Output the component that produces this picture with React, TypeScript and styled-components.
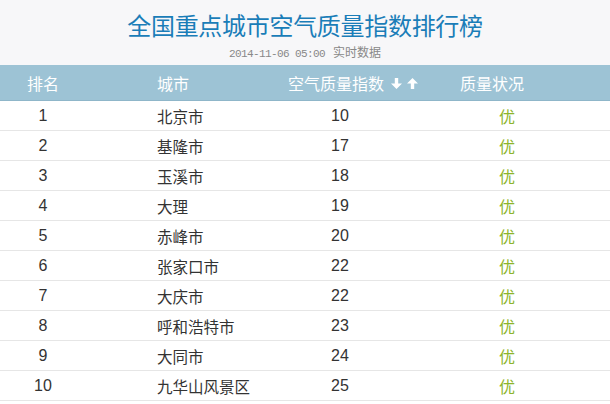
import React from "react";
import styled, { createGlobalStyle } from "styled-components";

const Global = createGlobalStyle`
  html, body { margin: 0; padding: 0; background: #fff; }
  body { font-family: "Liberation Sans", "Noto Sans CJK SC", sans-serif; }
`;

const Page = styled.div`
  width: 610px;
  height: 404px;
  overflow: hidden;
  background: #fff;
`;

const Top = styled.div`
  background: #f7f7f9;
  height: 65px;
  display: flex;
  flex-direction: column;
  align-items: center;
`;

const Title = styled.h1`
  margin: 10px 0 0 0;
  font-size: 24px;
  line-height: 30px;
  font-weight: normal;
  color: #1a7db8;
  font-family: "Noto Sans CJK SC", sans-serif;
  letter-spacing: -0.3px;
`;

const Sub = styled.div`
  margin-top: 4px;
  font-size: 12px;
  line-height: 16px;
  color: #888;
  display: flex;
  align-items: baseline;
  gap: 8px;
`;

const Mono = styled.span`
  font-family: "Liberation Mono", monospace;
  font-size: 11px;
  letter-spacing: -0.6px;
`;

const Cjk = styled.span`
  font-family: "Noto Sans CJK SC", sans-serif;
  font-size: 12px;
`;

const Grid = styled.div`
  display: grid;
  grid-template-columns: 86px 202px 172px 94px 1fr;
`;

const HeadRow = styled(Grid)`
  height: 36px;
  background: #9dc3d5;
  border-bottom: 1px solid #8fb6c9;
  box-sizing: border-box;
  align-items: center;
  color: #fff;
  font-size: 16px;
  font-family: "Noto Sans CJK SC", sans-serif;
`;

const Row = styled(Grid)`
  height: 30px;
  border-bottom: 1px solid #e6e6e6;
  box-sizing: border-box;
  align-items: center;
  color: #333;
  font-size: 16px;
`;

const Cell = styled.div<{ $align?: string; $pl?: number }>`
  padding-left: ${(p) => p.$pl || 0}px;
  white-space: nowrap;
  display: flex;
  align-items: center;
  justify-content: ${(p) =>
    p.$align === "center" ? "center" : "flex-start"};
`;

const CityText = styled.span`
  font-family: "Noto Sans CJK SC", sans-serif;
  font-size: 15.5px;
`;

const Good = styled.span`
  color: #8db52b;
  font-family: "Noto Sans CJK SC", sans-serif;
  font-size: 16px;
`;

const Arrows = styled.span`
  display: inline-flex;
  gap: 5px;
  margin-left: 7px;
  margin-top: 2px;
`;

const Arrow = ({ up }: { up?: boolean }) => (
  <svg width="11" height="11" viewBox="0 0 11 11">
    <g transform={up ? "" : "rotate(180 5.5 5.5)"}>
      <path d="M5.5 0 L11 5.5 L7.2 5.5 L7.2 11 L3.8 11 L3.8 5.5 L0 5.5 Z" fill="#fff" />
    </g>
  </svg>
);

const data: [number, string, number][] = [
  [1, "北京市", 10],
  [2, "基隆市", 17],
  [3, "玉溪市", 18],
  [4, "大理", 19],
  [5, "赤峰市", 20],
  [6, "张家口市", 22],
  [7, "大庆市", 22],
  [8, "呼和浩特市", 23],
  [9, "大同市", 24],
  [10, "九华山风景区", 25],
];

export default function App() {
  return (
    <Page>
      <Global />
      <Top>
        <Title>全国重点城市空气质量指数排行榜</Title>
        <Sub>
          <Mono>2014-11-06 05:00</Mono>
          <Cjk>实时数据</Cjk>
        </Sub>
      </Top>
      <HeadRow>
        <Cell $align="center">排名</Cell>
        <Cell $pl={71}>城市</Cell>
        <Cell>
          空气质量指数
          <Arrows>
            <Arrow />
            <Arrow up />
          </Arrows>
        </Cell>
        <Cell>质量状况</Cell>
        <Cell />
      </HeadRow>
      {data.map(([rank, city, aqi]) => (
        <Row key={rank}>
          <Cell $align="center">{rank}</Cell>
          <Cell $pl={71}>
            <CityText>{city}</CityText>
          </Cell>
          <Cell $pl={43}>{aqi}</Cell>
          <Cell $align="center">
            <Good>优</Good>
          </Cell>
          <Cell />
        </Row>
      ))}
    </Page>
  );
}
